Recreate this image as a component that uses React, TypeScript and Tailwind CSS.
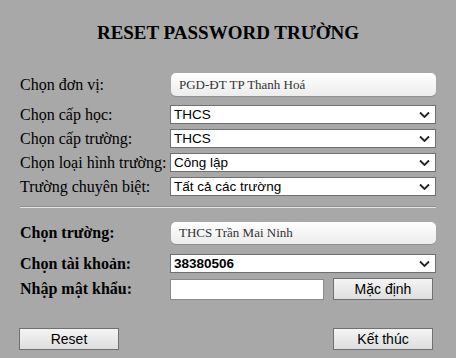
import React from "react";

const serif = "font-['Liberation_Serif','Times_New_Roman',serif]";
const sans = "font-['Liberation_Sans',Arial,sans-serif]";

function Chevron() {
  return (
    <svg width="11" height="7" viewBox="0 0 11 7" className="absolute right-[5px] top-1/2 -translate-y-1/2">
      <path d="M1 1 L5.5 5.5 L10 1" fill="none" stroke="#222" strokeWidth="1.8" />
    </svg>
  );
}

function Select({ value, bold }: { value: string; bold?: boolean }) {
  return (
    <div className={`relative h-[19px] w-[266px] bg-white border border-[#6f6f6f] flex items-center pl-[3px] text-[13.5px] text-black ${sans} ${bold ? "font-bold" : ""}`}>
      <span className="leading-none">{value}</span>
      <Chevron />
    </div>
  );
}

function Box({ value, h }: { value: string; h: string }) {
  return (
    <div className={`${h} ml-px w-[265px] rounded-[5px] bg-gradient-to-b from-white to-[#ececec] shadow-[0_1px_1px_rgba(0,0,0,0.15)] flex items-center pl-[8px] text-[13px] text-[#333] ${serif}`}>
      {value}
    </div>
  );
}

function Button({ label, w }: { label: string; w: string }) {
  return (
    <div className={`${w} h-[22px] border border-[#707070] bg-gradient-to-b from-[#f4f4f4] to-[#dedede] flex items-center justify-center text-[14px] text-black ${sans}`}>
      {label}
    </div>
  );
}

function Row({ label, children, bold, mt }: { label: string; children: React.ReactNode; bold?: boolean; mt: string }) {
  return (
    <div className={`flex items-center ${mt}`}>
      <div className={`w-[150px] text-[16px] text-black leading-none whitespace-nowrap ${serif} ${bold ? "font-bold" : ""}`}>{label}</div>
      {children}
    </div>
  );
}

export default function App() {
  return (
    <div className="w-[456px] h-[358px] bg-[#a8a8a8] overflow-hidden pl-[20px] pt-[20px]">
      <div className={`w-[416px] text-center text-[19px] font-bold text-black leading-[26px] ${serif}`}>RESET PASSWORD TRƯỜNG</div>
      <Row label="Chọn đơn vị:" mt="mt-[27px]">
        <Box value="PGD-ĐT TP Thanh Hoá" h="h-[23px]" />
      </Row>
      <Row label="Chọn cấp học:" mt="mt-[9px]"><Select value="THCS" /></Row>
      <Row label="Chọn cấp trường:" mt="mt-[5px]"><Select value="THCS" /></Row>
      <Row label="Chọn loại hình trường:" mt="mt-[5px]"><Select value="Công lập" /></Row>
      <Row label="Trường chuyên biệt:" mt="mt-[5px]"><Select value="Tất cả các trường" /></Row>
      <div className="mt-[10px] w-[416px] h-[2px] border-t border-[#8e8e8e] bg-[#e4e4e4]" />
      <Row label="Chọn trường:" bold mt="mt-[14px]">
        <Box value="THCS Trần Mai Ninh" h="h-[22px]" />
      </Row>
      <Row label="Chọn tài khoản:" bold mt="mt-[10px]"><Select value="38380506" bold /></Row>
      <Row label="Nhập mật khẩu:" bold mt="mt-[5px]">
        <div className="h-[21px] w-[154px] bg-white border border-[#8a8a8a]" />
        <div className="ml-[9px]"><Button label="Mặc định" w="w-[100px]" /></div>
      </Row>
      <div className="mt-[28px] flex w-[413px] justify-between">
        <div className="-ml-px"><Button label="Reset" w="w-[100px]" /></div>
        <Button label="Kết thúc" w="w-[100px]" />
      </div>
    </div>
  );
}
